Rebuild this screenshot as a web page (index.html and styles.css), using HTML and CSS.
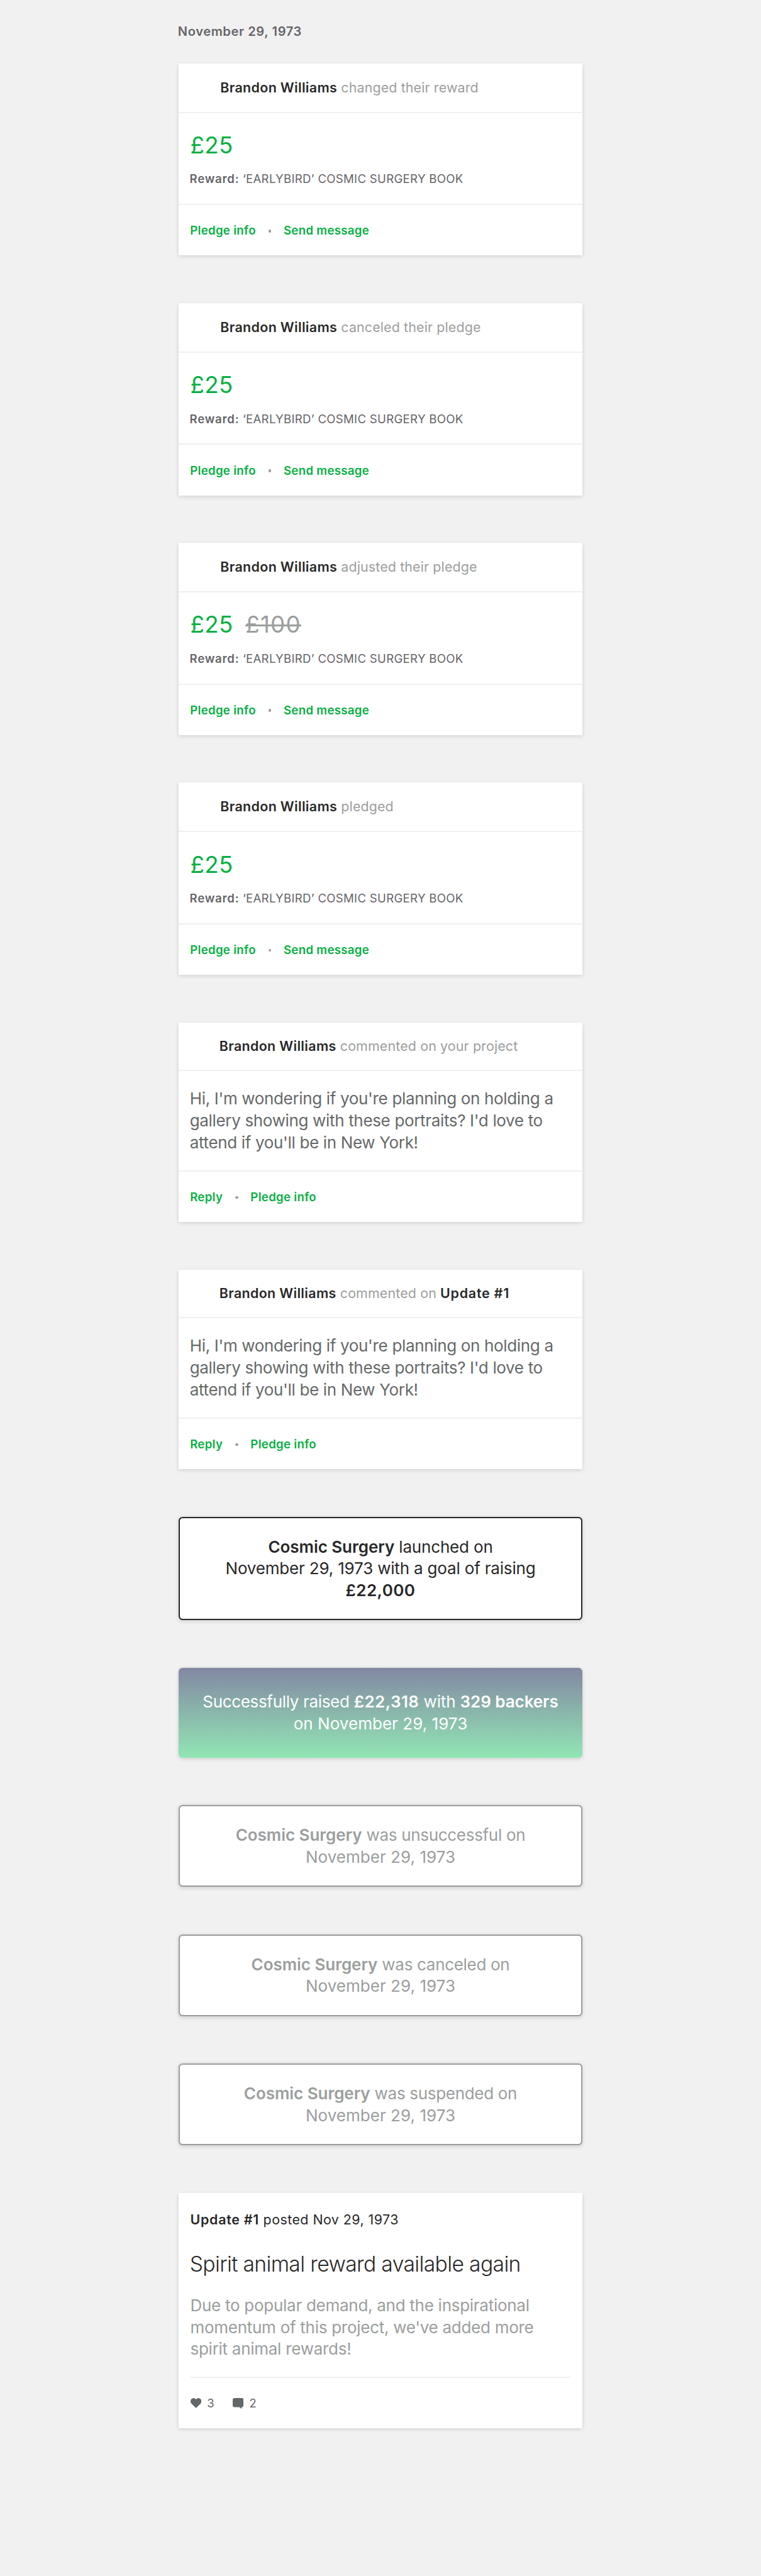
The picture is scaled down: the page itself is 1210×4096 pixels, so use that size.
FILE: index.html
```
<!DOCTYPE html>
<html lang="en">
<head>
<meta charset="utf-8">
<title>Project activity</title>
<link rel="stylesheet" href="styles.css">
</head>
<body>
<main class="feed">
  <h1 class="date">November 29, 1973</h1>

  <article class="card">
    <header class="card-header"><p class="event"><strong>Brandon Williams</strong> changed their reward</p></header>
    <div class="pledge">
      <p class="amounts"><span class="amount">£25</span></p>
      <p class="reward"><strong>Reward:</strong> ‘EARLYBIRD’ COSMIC SURGERY BOOK</p>
    </div>
    <footer class="actions"><a class="action">Pledge info</a><i class="dot"></i><a class="action">Send message</a></footer>
  </article>

  <article class="card">
    <header class="card-header"><p class="event"><strong>Brandon Williams</strong> canceled their pledge</p></header>
    <div class="pledge">
      <p class="amounts"><span class="amount">£25</span></p>
      <p class="reward"><strong>Reward:</strong> ‘EARLYBIRD’ COSMIC SURGERY BOOK</p>
    </div>
    <footer class="actions"><a class="action">Pledge info</a><i class="dot"></i><a class="action">Send message</a></footer>
  </article>

  <article class="card">
    <header class="card-header"><p class="event"><strong>Brandon Williams</strong> adjusted their pledge</p></header>
    <div class="pledge">
      <p class="amounts"><span class="amount">£25</span><s class="old-amount">£100</s></p>
      <p class="reward"><strong>Reward:</strong> ‘EARLYBIRD’ COSMIC SURGERY BOOK</p>
    </div>
    <footer class="actions"><a class="action">Pledge info</a><i class="dot"></i><a class="action">Send message</a></footer>
  </article>

  <article class="card">
    <header class="card-header"><p class="event"><strong>Brandon Williams</strong> pledged</p></header>
    <div class="pledge">
      <p class="amounts"><span class="amount">£25</span></p>
      <p class="reward"><strong>Reward:</strong> ‘EARLYBIRD’ COSMIC SURGERY BOOK</p>
    </div>
    <footer class="actions"><a class="action">Pledge info</a><i class="dot"></i><a class="action">Send message</a></footer>
  </article>

  <article class="card">
    <header class="card-header comment-header"><p class="event"><strong>Brandon Williams</strong> commented on your project</p></header>
    <p class="comment">Hi, I'm wondering if you're planning on holding a<br>gallery showing with these portraits? I'd love to<br>attend if you'll be in New York!</p>
    <footer class="actions"><a class="action">Reply</a><i class="dot"></i><a class="action">Pledge info</a></footer>
  </article>

  <article class="card">
    <header class="card-header comment-header"><p class="event"><strong>Brandon Williams</strong> commented on <strong class="update-ref">Update #1</strong></p></header>
    <p class="comment">Hi, I'm wondering if you're planning on holding a<br>gallery showing with these portraits? I'd love to<br>attend if you'll be in New York!</p>
    <footer class="actions"><a class="action">Reply</a><i class="dot"></i><a class="action">Pledge info</a></footer>
  </article>

  <article class="milestone launched">
    <p><strong>Cosmic Surgery</strong> launched on<br>November 29, 1973 with a goal of raising<br><strong class="figure">£22,000</strong></p>
  </article>

  <article class="milestone funded">
    <p><span class="tight">Successfully raised</span> <strong class="figure">£22,318</strong> with <strong>329 backers</strong><br><span class="loose">on November 29, 1973</span></p>
  </article>

  <article class="milestone ended">
    <p><strong>Cosmic Surgery</strong> was unsuccessful on<br><span class="loose">November 29, 1973</span></p>
  </article>

  <article class="milestone ended">
    <p><strong>Cosmic Surgery</strong> was canceled on<br><span class="loose">November 29, 1973</span></p>
  </article>

  <article class="milestone ended">
    <p><strong>Cosmic Surgery</strong> was suspended on<br><span class="loose">November 29, 1973</span></p>
  </article>

  <article class="card update">
    <p class="posted"><strong>Update #1</strong> posted Nov 29, 1973</p>
    <h2 class="title">Spirit animal reward available again</h2>
    <p class="excerpt">Due to popular demand, and the inspirational<br>momentum of this project, we've added more<br>spirit animal rewards!</p>
    <footer class="counts">
      <span class="count"><svg class="icon" viewBox="0 0 22 22"><path d="M11 20.300 1.900 11.300C-.6 8.700-.6 4.600 1.700 2.200 4.200-.3 8.200-.3 10.500 2.200L11 2.900l.5-.7c2.300-2.500 6.300-2.500 8.800 0 2.300 2.400 2.300 6.500-.2 9.100Z"/></svg>3</span>
      <span class="count"><svg class="icon" viewBox="0 0 22 22"><path d="M4 0h14a4 4 0 0 1 4 4v10.500a4 4 0 0 1-4 4v3.500l-4.600-3.500H4a4 4 0 0 1-4-4V4a4 4 0 0 1 4-4Z"/></svg>2</span>
    </footer>
  </article>
</main>
</body>
</html>
```
FILE: styles.css
```
/* 1rem is ten design units */
html {
  font-size: 7.877px;
  background: #f1f1f1;
}

* {
  box-sizing: border-box;
}

body {
  margin: 0;
  font-family: Inter, "Liberation Sans", sans-serif;
  color: #282828;
}

p, h1, h2 {
  margin: 0;
  font-weight: 400;
}

strong {
  font-weight: 600;
}

.feed {
  width: 81.6rem;
  min-height: 520rem;
  margin: 0 auto;
  padding-top: 4.75rem;
  display: flex;
  flex-direction: column;
  gap: 9.6rem;
}

.date {
  margin-bottom: -5.05rem;
  height: 3.5rem;
  font-size: 2.55rem;
  line-height: 3.5rem;
  font-weight: 600;
  letter-spacing: 0.0305em;
  color: #656469;
  text-indent: -0.1rem;
}

.card {
  background: #fff;
  box-shadow: 0 0.2rem 0.8rem rgba(0, 0, 0, 0.15);
}

.card-header {
  height: 10rem;
  padding-left: 8.47rem;
  display: flex;
  align-items: center;
  border-bottom: 2px solid #efeff4;
}

.comment-header {
  height: 9.8rem;
  padding-left: 8.27rem;
}

.event {
  font-size: 2.72rem;
  line-height: 3.4rem;
  letter-spacing: 0.006em;
  color: #9b9e9e;
}

.event strong {
  letter-spacing: 0.0164em;
  color: #282828;
}

.event .update-ref {
  letter-spacing: 0.036em;
}

.pledge {
  height: 18.6rem;
  padding: 3.6rem 2.4rem 0;
  border-bottom: 2px solid #efeff4;
}

.amounts {
  display: flex;
  gap: 2.5rem;
  margin-bottom: 2.5rem;
  font-size: 4.66rem;
  line-height: 5.8rem;
}

.amount {
  letter-spacing: 0.0084em;
  color: #05b141;
}

.old-amount {
  letter-spacing: 0.035em;
  color: #9b9e9e;
  text-decoration-thickness: 3px;
}

.reward {
  font-size: 2.36rem;
  line-height: 3rem;
  letter-spacing: 0.0165em;
  color: #656469;
}

.reward strong {
  letter-spacing: 0.042em;
  margin-left: -0.12rem;
}

.actions {
  height: 10.2rem;
  padding: 0.25rem 2.35rem 0;
  display: flex;
  align-items: center;
  gap: 2.5rem;
  font-size: 2.36rem;
  line-height: 3rem;
}

.action {
  font-weight: 600;
  letter-spacing: 0.018em;
  color: #05b141;
}

.dot {
  width: 0.6rem;
  height: 0.6rem;
  border-radius: 50%;
  background: #9b9e9e;
}

.comment {
  height: 20.3rem;
  padding: 3.5rem 2.3rem 0;
  border-bottom: 2px solid #efeff4;
  font-size: 3.3rem;
  line-height: 4.4rem;
  letter-spacing: -0.0128em;
  color: #656969;
}

.milestone {
  display: flex;
  align-items: center;
  justify-content: center;
  height: 16.5rem;
  padding-top: 0.15rem;
  border-radius: 0.8rem;
  background: #fff;
  box-shadow: 0 0.2rem 0.8rem rgba(0, 0, 0, 0.15);
  font-size: 3.3rem;
  line-height: 4.4rem;
  letter-spacing: -0.0065em;
  text-align: center;
}

.milestone strong {
  letter-spacing: -0.0015em;
}

.milestone .figure {
  letter-spacing: 0.018em;
}

.milestone .tight {
  letter-spacing: -0.0126em;
}

.milestone .loose {
  letter-spacing: 0.0016em;
}

.launched {
  height: 20.9rem;
  border: 2px solid #282828;
}

.funded {
  height: 18.1rem;
  background: linear-gradient(#8288a2, #92e6b4);
  color: #fff;
}

.ended {
  border: 2px solid #9b9e9e;
  color: #9b9e9e;
  letter-spacing: -0.0115em;
}

.update {
  height: 47.5rem;
  padding: 3.65rem 2.4rem 0;
}

.posted {
  font-size: 2.72rem;
  line-height: 3.4rem;
  letter-spacing: 0.021em;
}

.posted strong {
  letter-spacing: 0.0343em;
}

.title {
  margin-top: 4.8rem;
  font-size: 4.27rem;
  line-height: 5.2rem;
  font-weight: 300;
  letter-spacing: -0.0187em;
  text-indent: -0.1rem;
}

.excerpt {
  margin-top: 3.55rem;
  height: 16.8rem;
  border-bottom: 2px solid #efeff4;
  font-size: 3.3rem;
  line-height: 4.4rem;
  letter-spacing: -0.0103em;
  color: #9b9e9e;
}

.counts {
  height: 10.1rem;
  padding-top: 0.2rem;
  display: flex;
  align-items: center;
  gap: 3.7rem;
  font-size: 2.33rem;
  line-height: 3rem;
  color: #656469;
}

.count {
  display: flex;
  align-items: center;
  gap: 1.2rem;
}

.icon {
  width: 2.2rem;
  height: 2.2rem;
  fill: #636868;
}
```
